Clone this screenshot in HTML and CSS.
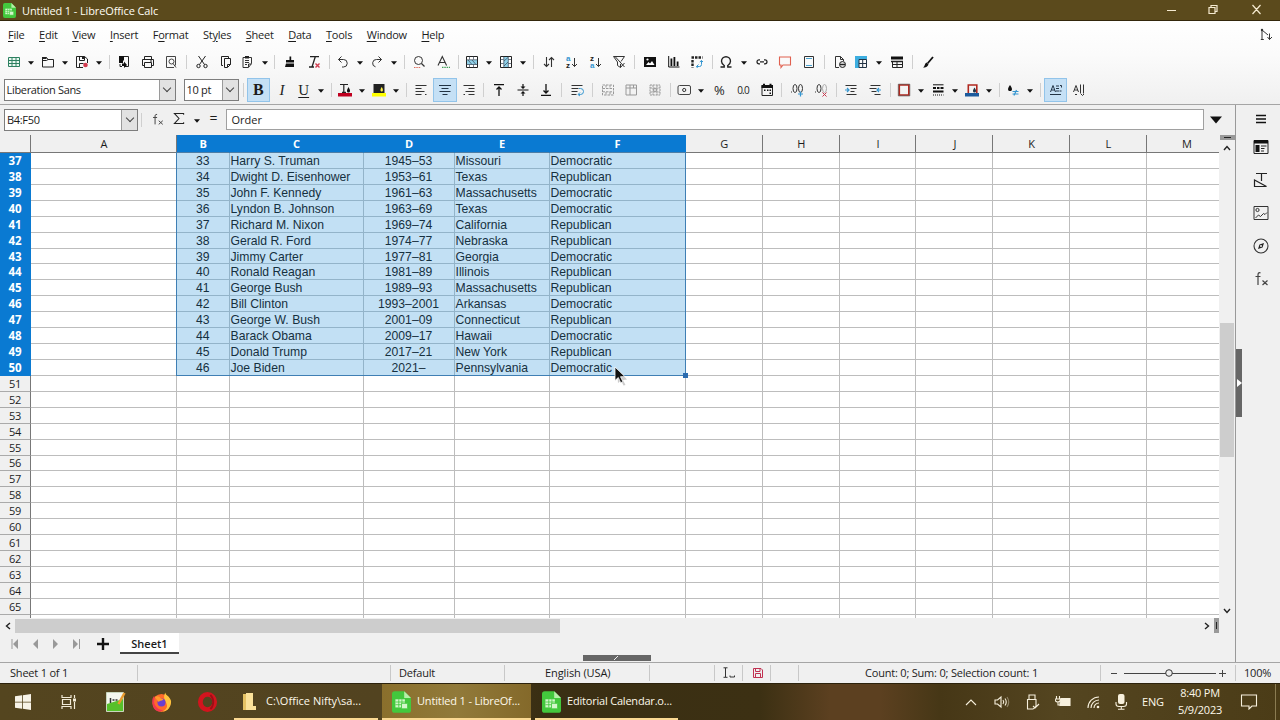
FILE: index.html
```html
<!DOCTYPE html>
<html lang="en">
<head>
    <meta charset="utf-8">
    <title>Untitled 1 - LibreOffice Calc</title>
    <link rel="stylesheet" href="styles.css">
</head>
<body>
<!-- Icon definitions -->
<svg class="sprite">
    <symbol id="calc" viewBox="0 0 14 16"><path fill="#43c83d" d="M2 0h7l5 5v9a2 2 0 0 1-2 2H2a2 2 0 0 1-2-2V2a2 2 0 0 1 2-2z"/><path fill="#b6f0a8" d="M9 0l5 5H9z"/><path fill="#d3f7cb" d="M2.500 6h7v6h-7z"/><path stroke="#43c83d" stroke-width=".6" d="M2.500 8h7M2.500 10h7M5 6v6M7.300 6v6"/><path fill="#d3f7cb" stroke="#43c83d" stroke-width=".6" d="M7 9h4.500v4H7z"/></symbol>
    <symbol id="new" viewBox="0 0 14 14"><path fill="#e9f7f0" stroke="#2d8060" d="M1.500 2.500h11v9h-11zM1.500 5.500h11M1.500 8.500h11M5 2.500v9M9 2.500v9"/></symbol>
    <symbol id="open" viewBox="0 0 14 14"><path fill="none" stroke="#222" d="M1.500 12V2.500h4l1.500 2h5.500V12zM1.500 5.500h4l1.500-1"/><path stroke="#222" stroke-width="2" d="M1 3h4.500"/></symbol>
    <symbol id="save" viewBox="0 0 14 14"><path fill="none" stroke="#222" d="M8 12.500H1.500v-11h8l3 2.500v4M4.500 1.500v4h5v-4M4.500 12V8.500h4"/><path fill="#222" d="M7 1.500h2V4H7z"/><circle cx="10.500" cy="10" r="2.300" fill="#d23c50"/></symbol>
    <symbol id="export" viewBox="0 0 14 14"><path fill="none" stroke="#222" d="M7 1.500h4.500v10H8M3 9v2.500h2"/><path fill="#111" d="M2 1h5v5l-1-1v3H2zM5 8.500h2V6.500l3 3.500-3 3v-2H5z"/></symbol>
    <symbol id="print" viewBox="0 0 14 14"><path fill="none" stroke="#222" d="M3.500 4.500v-3h7v3M3 10.500H1.500v-6h11v6H11M3.500 7.500h7v5h-7zM9 6h2"/></symbol>
    <symbol id="preview" viewBox="0 0 14 14"><path fill="none" stroke="#444" d="M10 12.500H2.500v-11h9v9"/><circle cx="7.500" cy="6.500" r="2.500" fill="none" stroke="#444"/><path stroke="#444" d="M9 8.500l3 4"/></symbol>
    <symbol id="cut" viewBox="0 0 14 14"><path fill="none" stroke="#222" d="M3.500 1l6 8.500M10.500 1l-6 8.500"/><circle cx="3.500" cy="11" r="1.700" fill="none" stroke="#222"/><circle cx="10.500" cy="11" r="1.700" fill="none" stroke="#222"/></symbol>
    <symbol id="copy" viewBox="0 0 14 14"><path fill="none" stroke="#222" d="M4 10.500H2.500v-9h7V3M5.500 3.500h6v6l-3 3h-3zM8.500 12V9.500h3"/></symbol>
    <symbol id="paste" viewBox="0 0 14 14"><path fill="none" stroke="#333" d="M3 2.500h8.500v6l-3 4H3zM5 5.500h4M5 7.500h4M5 9.500h2M8.500 12V9h3"/><path fill="#222" d="M5 1h4v2.500H5z"/></symbol>
    <symbol id="clone" viewBox="0 0 14 14"><path fill="#111" d="M6.500 1.500h1.700V5H11v2.500H3V5h3.500zM3 8.500h8V12H2z"/></symbol>
    <symbol id="clear" viewBox="0 0 14 14"><path stroke="#222" fill="none" stroke-width="1.300" d="M3 1.700h9M2 12h5M8.200 2L5 12"/><path stroke="#d23c50" stroke-width="1.400" d="M8.500 8.500l4 4m0-4l-4 4"/></symbol>
    <symbol id="undo" viewBox="0 0 14 14"><path fill="none" stroke="#333" d="M5.500 1.500l-3 3 3 3M2.500 4.500h5a3.700 3.700 0 0 1 0 7.500H6"/></symbol>
    <symbol id="redo" viewBox="0 0 14 14"><path fill="none" stroke="#333" d="M8.500 1.500l3 3-3 3M11.500 4.500h-5a3.700 3.700 0 0 0-1 7.300"/></symbol>
    <symbol id="find" viewBox="0 0 14 14"><circle cx="6.500" cy="5.500" r="4" fill="none" stroke="#333"/><path stroke="#333" stroke-width="1.300" d="M9.500 8.500l3 3"/><path stroke="#e07060" stroke-dasharray="1.500 .8" d="M2 12.500h7"/></symbol>
    <symbol id="spell" viewBox="0 0 14 14"><path fill="none" stroke="#333" stroke-width="1.100" d="M2 10.500L6.300 1.500l4.300 9M3.500 7.500h5.600"/><path stroke="#44a05a" stroke-dasharray="1.500 .8" stroke-width="1.200" d="M6 12.300h8"/></symbol>
    <symbol id="row" viewBox="0 0 14 14"><path fill="#fff" stroke="#222" d="M1.500 1.500h11v11h-11z"/><path fill="#8fd0e8" d="M2 5h10v4.500H2z"/><path fill="none" stroke="#345" stroke-width=".7" d="M1.500 4.800h11M1.500 9.500h11M4.500 1.500v3m4-3v3M4.500 9.500v3m4-3v3M3 5l4 4.500M7 5l4 4.500"/></symbol>
    <symbol id="col" viewBox="0 0 14 14"><path fill="#fff" stroke="#222" d="M1.500 1.500h11v11h-11z"/><path fill="#8fd0e8" d="M4.800 2h4.500v10H4.800z"/><path fill="none" stroke="#345" stroke-width=".7" d="M4.800 1.500v11M9.300 1.500v11M1.500 4.500h3m-3 4h3M9.300 4.500h3m-3 4h3M5 6l4-3.500M5 11l4-4"/></symbol>
    <symbol id="sort" viewBox="0 0 14 14"><path fill="none" stroke="#333" stroke-width="1.100" d="M4.500 2v9.500M2 9l2.500 2.500L7 9M9.500 12V2.500M7 5l2.500-2.500L12 5"/></symbol>
    <symbol id="filter" viewBox="0 0 14 14"><path fill="none" stroke="#333" d="M1.500 1.500h11L9 6.500M1.500 1.500L5.500 7v3.500l3 2V9M3.500 2l9 10M12.500 8l-4 4.500"/></symbol>
    <symbol id="image" viewBox="0 0 14 14"><path fill="#111" d="M1 2h12v10H1z"/><path fill="#fff" d="M3 10l2.500-3 1.500 1.500L9 6l2.500 4z"/><circle cx="4.500" cy="4.500" r="1.100" fill="#fff"/></symbol>
    <symbol id="chart" viewBox="0 0 14 14"><path fill="#111" d="M3.500 3.500h1.800V11H3.500zM6.500 2h1.800v9H6.500zM9.700 6.500h1.800V11H9.700z"/><path fill="none" stroke="#111" d="M1.700 1v11h10.800"/></symbol>
    <symbol id="pivot" viewBox="0 0 14 14"><path stroke="#222" stroke-width="2.400" stroke-dasharray="2.500 1" fill="none" d="M1.500 2.500h11M2.500 5v7.500"/><path fill="none" stroke="#3596d0" d="M11.500 5.500v4a2 2 0 0 1-2 2H6.500m2-2l-2 2 1 1.500M9.800 7l1.700-1.500L13 7"/></symbol>
    <symbol id="omega" viewBox="0 0 14 14"><path fill="none" stroke="#222" stroke-width="1.400" d="M1.500 12h3.700v-1.500A5 5 0 0 1 2.500 6.300a4.500 4.500 0 0 1 9 0 5 5 0 0 1-2.700 4.200V12h3.700"/></symbol>
    <symbol id="link" viewBox="0 0 14 14"><path fill="none" stroke="#222" stroke-width="1.200" d="M5 4.800H4a2 2 0 0 0 0 4h1M9 4.800h1a2 2 0 0 1 0 4H9M5 6.800h4"/></symbol>
    <symbol id="comment" viewBox="0 0 14 14"><path fill="none" stroke="#e0604f" stroke-width="1.100" d="M1.500 2h11v8H5l-2 2.500V10H1.500z"/></symbol>
    <symbol id="header" viewBox="0 0 14 14"><path fill="none" stroke="#333" d="M2.500 1.500h9v11h-9z"/><path stroke="#4aa3d0" d="M4 3.500h6M4 10.500h6"/></symbol>
    <symbol id="area" viewBox="0 0 14 14"><path fill="none" stroke="#333" d="M6 12.500H2.500v-11h5l3 3V6M7.500 1.500v3h3"/><circle cx="9.500" cy="9.500" r="3" fill="#ddd" stroke="#222"/><path stroke="#222" stroke-width="1.300" d="M7 9.500h5"/></symbol>
    <symbol id="freeze" viewBox="0 0 14 14"><path fill="#3daee0" d="M1 1h12v3.500H5V13H1z"/><path fill="none" stroke="#234" d="M5 4.500h7.500v8H5zM5 8.500h7.500M8.700 4.500v8"/></symbol>
    <symbol id="split" viewBox="0 0 14 14"><path fill="#111" d="M1 1.500h12v3H1z"/><path fill="none" stroke="#222" d="M2.500 6.500h10v6h-10zM2.500 9.500h10M7 6v7"/><path stroke="#222" stroke-width="1.500" d="M1 6.500h12"/></symbol>
    <symbol id="draw" viewBox="0 0 14 14"><path stroke="#111" stroke-width="1.800" d="M12 2L6.500 8.500"/><path fill="#111" d="M5.500 7.500l2 2c-1 2.500-3 3-5.500 3 2-1 1.500-4 3.500-5z"/></symbol>
    <symbol id="al" viewBox="0 0 14 14"><path stroke="#333" d="M1.500 2.500h11M1.500 5.500h6M1.500 8.500h9M1.500 11.500h6M11 11.500h1.500"/></symbol>
    <symbol id="ac" viewBox="0 0 14 14"><path stroke="#234" d="M1 2.500h12M3.500 5.500h7M1.500 8.500h11M4.500 11.500h5"/></symbol>
    <symbol id="ar" viewBox="0 0 14 14"><path stroke="#333" d="M1.500 2.500h11M6.500 5.500h6M3.500 8.500h9M6.500 11.500h6M1.500 11.500H3"/></symbol>
    <symbol id="top" viewBox="0 0 14 14"><path fill="none" stroke="#111" stroke-width="1.300" d="M2 1.700h10M7 13V4M4.500 6.500L7 4l2.500 2.500"/></symbol>
    <symbol id="mid" viewBox="0 0 14 14"><path fill="none" stroke="#111" stroke-width="1.200" d="M1.500 7h11M7 1v4M7 9v4"/><path fill="#111" d="M4.500 3.500h5L7 6zM4.500 10.500h5L7 8z"/></symbol>
    <symbol id="bot" viewBox="0 0 14 14"><path fill="none" stroke="#111" stroke-width="1.300" d="M2 12.300h10M7 1v9M4.500 7.500L7 10l2.500-2.500"/></symbol>
    <symbol id="wrap" viewBox="0 0 14 14"><path stroke="#333" d="M1.500 2.500h11M1.500 5.500h7M1.500 8.500h6M1.500 11.500h5"/><path fill="none" stroke="#3596d0" d="M9 5.500h1.500a3 3 0 0 1 0 6H8.500M10 9.500l-2 2 2 1.500"/></symbol>
    <symbol id="merge" viewBox="0 0 14 14"><path fill="none" stroke="#999" stroke-dasharray="2.500 1" d="M1.500 2h11v10h-11zM5 2v3m4-3v3M5 9v3m4-3v3M1.500 5.500h11M1.500 8.800h11"/></symbol>
    <symbol id="mergec" viewBox="0 0 14 14"><path fill="none" stroke="#999" d="M2 2h10.500v10H2zM2 5h10.500M6 2v10M9.500 2v3"/></symbol>
    <symbol id="unmerge" viewBox="0 0 14 14"><path fill="none" stroke="#999" d="M2 2h10v10H2zM2 5h10M2 9h10M5 2v10M9 2v10" stroke-dasharray="2 .8"/><circle cx="7" cy="7" r="1.500" fill="none" stroke="#999"/></symbol>
    <symbol id="money" viewBox="0 0 14 14"><rect x="1" y="2.500" width="12.500" height="9" rx="1.500" fill="none" stroke="#444"/><circle cx="7.200" cy="7" r="1.600" fill="none" stroke="#333"/></symbol>
    <symbol id="date" viewBox="0 0 14 14"><path fill="none" stroke="#222" d="M2 2.500h10.500v10H2z"/><path fill="#111" d="M1.500 2h11.500v3H1.500zM3 .8h2V2H3zM9.500.8h2V2h-2zM4 6.500h1.500V8H4zM7 6.500h1.500V8H7zM9.500 6.500H11V8H9.500zM9.500 9.500H11V11H9.500z"/></symbol>
    <symbol id="adddec" viewBox="0 0 14 14"><path fill="none" stroke="#333" d="M1.500 8.500v1"/><ellipse cx="5" cy="5.500" rx="2" ry="4" fill="none" stroke="#333"/><ellipse cx="10.500" cy="5.500" rx="2" ry="4" fill="none" stroke="#333"/><path stroke="#3596d0" stroke-width="1.200" d="M8 11h5M10.500 8.500v5"/></symbol>
    <symbol id="deldec" viewBox="0 0 14 14"><path fill="none" stroke="#333" d="M1.500 8.500v1"/><ellipse cx="5" cy="5.500" rx="2" ry="4" fill="none" stroke="#333"/><ellipse cx="10.500" cy="5.500" rx="2" ry="4" fill="none" stroke="#aaa"/><path stroke="#c8354b" d="M8.500 9.500l4 4m0-4l-4 4"/></symbol>
    <symbol id="ind" viewBox="0 0 14 14"><path stroke="#333" d="M1.500 2.500h11M6.500 5.500h6M6.500 8.500h4M2.500 11.500h10"/><path fill="none" stroke="#3596d0" stroke-width="1.200" d="M1 7h4M3 5l2 2-2 2"/></symbol>
    <symbol id="outd" viewBox="0 0 14 14"><path stroke="#333" d="M2.500 2.500h10M1.500 5.500h7M3.500 8.500h5M6.500 11.500h6"/><path fill="none" stroke="#3596d0" stroke-width="1.200" d="M9 7h4M11 5L9 7l2 2"/></symbol>
    <symbol id="border" viewBox="0 0 14 14"><path fill="none" stroke="#b0281f" stroke-width="1.600" d="M2.300 2h9.500v10H2.300z"/><path fill="none" stroke="#222" stroke-width=".5" d="M1.300 1.200h11.500v11.700H1.300z"/></symbol>
    <symbol id="bstyle" viewBox="0 0 14 14"><path stroke="#111" d="M2 1.800h10.500"/><path stroke="#111" stroke-width="1.800" d="M2 5h3m1 0h2.500m1 0h3M2 8.500h10.500"/><path stroke="#111" stroke-dasharray="1 1" d="M2 12h10.500"/></symbol>
    <symbol id="bcolor" viewBox="0 0 14 14"><path fill="none" stroke="#b0281f" stroke-width="1.600" d="M3.300 10V2h8.500v8"/><path fill="#234" d="M9.500 4.500C12 8 11 9.500 9.500 9.500S7 8 9.500 4.500z"/><path fill="#1c5a9c" d="M0 10h14v3.500H0z"/></symbol>
    <symbol id="cond" viewBox="0 0 14 14"><path fill="#111" d="M4 2C7.200 6 6 8 4 8S.8 6 4 2z"/><path fill="none" stroke="#3596d0" stroke-width="1.200" d="M6.500 8.500h6M6.500 11h6M10.500 7l-2.500 5.500"/></symbol>
    <symbol id="ltr" viewBox="0 0 14 14"><path fill="none" stroke="#234" d="M1.500 9L4 2.500 6.500 9M2.500 7h3.500M7 3h3M7 5.500h3M7 8h3M1 11.500h11M11 2.500h1.500v2M10.500 8l2 0"/></symbol>
    <symbol id="ttb" viewBox="0 0 14 14"><path fill="none" stroke="#333" d="M1.500 9L4 2.500 6.500 9M2.500 7h3.500M8.500 1.500v9M11.500 1.500v9M3 11l1 1 1-1M9 11l1.500 1.500L12 11"/></symbol>
    <symbol id="fcolor" viewBox="0 0 14 14"><path fill="none" stroke="#222" stroke-width="1.200" d="M2 1.500h8M5.800 1.500V9M4 9.300h4"/><path fill="#111" d="M10.500 4C13 8 12 9.500 10.500 9.500S8 8 10.500 4z"/><path fill="#c00020" d="M0 10h14v3.500H0z"/></symbol>
    <symbol id="bgcolor" viewBox="0 0 14 14"><path fill="#222" d="M1.500 1h11v9h-11z"/><path fill="#fff14a" d="M9.700 4c2 3 1.200 4.500 0 4.500S7.700 7 9.700 4z"/><path fill="#ffff00" d="M0 10h14v3.500H0z"/></symbol>
    <symbol id="sigma" viewBox="0 0 14 14"><path fill="none" stroke="#222" stroke-width="1.100" d="M12 3V1.500H2L7 7l-5 5.500h10V11"/></symbol>
    <symbol id="update" viewBox="0 0 14 14"><path fill="none" stroke="#333" d="M3 2v9M3 2l6 5M1.800 11.500h3M10.500 5.500v6M8.500 9l2 2.500 2.500-2.500"/><circle cx="3" cy="2" r="1.200" fill="#333"/></symbol>
    <symbol id="props" viewBox="0 0 16 16"><path fill="none" stroke="#222" d="M1 1.500h14v13H1z"/><path fill="#111" d="M1 1h14v3.500H1zM2.500 6h4v7h-4z"/><path stroke="#222" d="M8 7h5.500M8 9.500h3.500M8 12h3"/></symbol>
    <symbol id="styles" viewBox="0 0 16 16"><path fill="none" stroke="#222" stroke-width="1.200" d="M3 1.500h11M8.500 1.500V9M1.500 8v6.500h12z"/></symbol>
    <symbol id="gallery" viewBox="0 0 16 16"><path fill="none" stroke="#333" d="M1 1.500h14v13H1z"/><circle cx="4.500" cy="5" r="1.600" fill="none" stroke="#333"/><path fill="none" stroke="#333" d="M2.500 13l3-3 2 1.500 3-3 1.500 1 2-2"/></symbol>
    <symbol id="nav" viewBox="0 0 16 16"><circle cx="8" cy="8" r="7" fill="none" stroke="#333" stroke-width="1.100"/><path fill="#222" d="M11 5L9.500 9.500 5 11l1.500-4.500z"/><circle cx="8" cy="8" r="1" fill="#eee"/></symbol>
    <symbol id="fx" viewBox="0 0 16 16"><path fill="none" stroke="#444" stroke-width="1.200" d="M7.500 1.800C4.800 1.300 5 3 5 5v9M2.500 5.500h5M9.500 9.500l5 4.500m0-4.500l-5 4.500"/></symbol>
    <symbol id="arrow" viewBox="0 0 6 4"><path fill="#111" d="M0 .3h6L3 3.700z"/></symbol>
</svg>

<header class="titlebar">
    <svg class="app-icon"><use href="#calc"/></svg>
    <span class="title">Untitled 1 - LibreOffice Calc</span>
    <svg class="winbtns" viewBox="0 0 94 14">
        <path fill="none" stroke="#f5ead0" stroke-width="1.200" d="M0 7.500h9M42 4.500h6v6h-6zM44 4V2.500h6v6H48.500M85.500 2l8 9m0-9l-8 9"/>
    </svg>
</header>

<div class="top">
    <nav class="menu">
        <span><u>F</u>ile</span><span><u>E</u>dit</span><span><u>V</u>iew</span><span><u>I</u>nsert</span><span>F<u>o</u>rmat</span><span>St<u>y</u>les</span><span><u>S</u>heet</span><span><u>D</u>ata</span><span><u>T</u>ools</span><span><u>W</u>indow</span><span><u>H</u>elp</span>
        <svg class="update"><use href="#update"/></svg>
    </nav>
    <div class="toolbar" id="standard"></div>
    <div class="toolbar second">
        <div class="combo font-name"><span>Liberation Sans</span><i></i></div>
        <div class="combo font-size"><span>10 pt</span><i></i></div>
        <div class="group" id="formatting"></div>
    </div>
</div>

<div class="middle">
    <div class="work">
        <div class="formula">
            <div class="combo cell-name"><span>B4:F50</span><i></i></div>
            <b class="sep"></b>
            <svg class="fx"><use href="#fx"/></svg>
            <svg class="sigma"><use href="#sigma"/></svg>
            <svg class="arrow"><use href="#arrow"/></svg>
            <span class="equals">=</span>
            <div class="input">Order</div>
            <svg class="expand"><use href="#arrow"/></svg>
        </div>
        <div class="sheet">
            <div class="grid-wrap">
                <div class="grid" id="grid"></div>
                <div class="selection"><i></i></div>
                <svg class="pointer" viewBox="0 0 14 20"><path fill="#aaa" opacity=".6" d="M3 2.500l10 11-4 .5 2.500 5-2 .5-2.500-5-3 2.500z"/><path fill="#111" stroke="#fff" stroke-width=".8" d="M1 1v13.500l3.300-3 2.400 5.200 2.200-1-2.400-5h4.500z"/></svg>
            </div>
            <div class="vscroll">
                <b class="split-h"></b>
                <svg viewBox="0 0 8 6"><path d="M1 5l3-3.500L7 5"/></svg>
                <div class="track"><div class="thumb"></div></div>
                <svg viewBox="0 0 8 6"><path d="M1 1l3 3.500L7 1"/></svg>
            </div>
        </div>
        <div class="hscroll">
            <svg viewBox="0 0 6 8"><path d="M5 1L1.500 4 5 7"/></svg>
            <div class="thumb"></div>
            <svg viewBox="0 0 6 8"><path d="M1 1l3.500 3L1 7"/></svg>
            <b class="split-v"></b>
        </div>
        <div class="tabs">
            <svg class="tabnav" viewBox="0 0 70 12"><path fill="#999" d="M7 1v10L2 6zM27 1v10l-5-5zM42 1v10l5-5zM62 1v10l5-5z"/><path stroke="#999" d="M1 1v10M68.500 1v10"/></svg>
            <svg class="plus" viewBox="0 0 12 12"><path stroke="#111" stroke-width="2.400" d="M0 6h12M6 0v12"/></svg>
            <span class="tab">Sheet1</span>
            <svg class="handle" viewBox="0 0 68 6"><path stroke="#eee" d="M31 5l4-4"/></svg>
        </div>
    </div>
    <aside class="sidebar">
        <svg class="burger" viewBox="0 0 10 10"><path stroke="#111" stroke-width="1.300" d="M0 1.500h10M0 5h10M0 8.500h10"/></svg>
        <svg><use href="#props"/></svg>
        <svg><use href="#styles"/></svg>
        <svg><use href="#gallery"/></svg>
        <svg><use href="#nav"/></svg>
        <svg><use href="#fx"/></svg>
        <div class="grip"></div>
    </aside>
</div>

<footer class="status">
    <span class="s-sheet">Sheet 1 of 1</span>
    <span class="s-blank"></span>
    <span class="s-style">Default</span>
    <span class="s-lang">English (USA)</span>
    <span class="s-gap"></span>
    <span class="s-ins"><svg viewBox="0 0 14 12"><path fill="none" stroke="#333" d="M1.500.8h4M3.500 1v9M1.500 10.300h4M8 8.500v1.500h4.500V8.500"/></svg></span>
    <span class="s-mod"><svg viewBox="0 0 10 10"><path fill="none" stroke="#c03050" d="M.5.500h7.500l1.500 1.500v7.500h-9zM2.500.5v3h4.500v-3M2.500 9.500v-4h5v4"/></svg></span>
    <span class="s-sign"></span>
    <span class="s-count">Count: 0; Sum: 0; Selection count: 1</span>
    <span class="s-zoom"><svg viewBox="0 0 116 10"><path stroke="#444" d="M1 5.500h6M14 5.500h92M109 5.500h7M112.500 2v7"/><circle cx="59" cy="5" r="3.300" fill="#eee" stroke="#333"/></svg></span>
    <span class="s-pct">100%</span>
</footer>

<div class="taskbar">
    <div class="pin"><svg viewBox="0 0 16 16"><path fill="#f7f3e8" d="M0 2.300l7-1v6.400H0zM7.800 1.200L16 0v7.700H7.800zM0 8.400h7v6.300l-7-1zM7.800 8.400H16V16l-8.200-1.200z"/></svg></div>
    <div class="pin"><svg viewBox="0 0 16 16"><path fill="none" stroke="#f3ecd8" stroke-width="1.200" d="M1 1v2.500h9V1M1.500 5.500h8v5h-8zM1 15v-2.500h9V15M13.500 1v3M13.500 8v7"/><path fill="#f3ecd8" d="M12 4.500h3v3h-3z"/></svg></div>
    <div class="pin"><svg class="big" viewBox="0 0 20 22"><path fill="#f3f6ee" stroke="#c9d6bd" d="M1 1.500h17v19H1z"/><path fill="#57c02a" d="M1.500 13L17.500 8v12h-16z"/><path stroke="#333" stroke-width="1.500" d="M5 7v5M7 9h2M10 9h2"/><path stroke="#e89a2e" stroke-width="2.500" d="M19 2l-6 11"/></svg></div>
    <div class="pin"><svg class="big" viewBox="0 0 22 22"><circle cx="11" cy="12" r="9.500" fill="#ff6a2b"/><path fill="#ffc33d" d="M15 1c0 3 5 4 6 9 .5 6-4 11-9 11 4-2 6-5 4-9-1-3-4-5-1-11z"/><path fill="#f2384f" d="M3 5c2 1-1 5 1 9s6 6 9 5c-4 4-10 1-11-4S1 8 3 5z"/><circle cx="11" cy="11.500" r="4.200" fill="#6a3fd0"/><path fill="#ff9a2b" d="M4 6c2-2 5-1 6 1l3 1c-1 2-4 1-5 3z"/></svg></div>
    <div class="pin"><svg class="big" viewBox="0 0 22 22"><ellipse cx="11" cy="11" rx="7.500" ry="8" fill="none" stroke="#d2141e" stroke-width="5"/><path fill="none" stroke="#9c0f16" stroke-width="2" d="M14 3.500c4 4 4 11 0 15"/></svg></div>
    <div class="task folder"><svg viewBox="0 0 14 18"><path fill="#e5c264" d="M0 1h6l1 16H0z"/><path fill="#fbe29a" d="M3 0h7v13h3v4H3z"/></svg><span>C:\Office Nifty\sa...</span></div>
    <div class="task active"><svg class="calc"><use href="#calc"/></svg><span>Untitled 1 - LibreOf...</span></div>
    <div class="task third"><svg class="calc"><use href="#calc"/></svg><span>Editorial Calendar.o...</span></div>
    <div class="tray">
        <svg viewBox="0 0 16 16"><path d="M3 11l5-5 5 5"/></svg>
        <svg viewBox="0 0 16 16"><path d="M1 6h2.500L7 3v10L3.500 10H1zM9 6q1.500 2 0 4M11 4.500q2.500 3.500 0 7"/><path opacity=".4" d="M13 3q3.500 5 0 10"/></svg>
        <svg viewBox="0 0 16 16"><path d="M5 5V1h6v4M3.500 5.500h8.500V12q-1 2.500-3 3H3.500zM9 12l2 2 4-4"/></svg>
        <svg viewBox="0 0 16 16"><path d="M1.500 2v3M4.500 2v3M0 5h5.500q0 3-2.700 3T0 5M3 8v3h2"/><path class="solid" d="M6 4.500h9v7H5V9z"/></svg>
        <svg viewBox="0 0 16 16"><path d="M3 14A11 11 0 0 1 14 3M6 14a8 8 0 0 1 8-8M9 14a5 5 0 0 1 5-5"/><circle class="solid" cx="13" cy="13" r="1.300"/></svg>
        <svg viewBox="0 0 16 16"><rect class="solid" x="5" y="0" width="6.500" height="10" rx="2"/><path d="M3 8v2q0 2.500 3 2.500h4.500q3 0 3-2.500V8M8.300 12.500V15M5 15.300h6.500"/></svg>
        <span class="lang">ENG</span>
        <div class="clock"><span>8:40 PM</span><span>5/9/2023</span></div>
        <svg class="notif" viewBox="0 0 18 16"><path stroke-width="1.300" d="M1.500 1h15v11H12l-3 3v-3H1.500z"/></svg>
        <b class="peek"></b>
    </div>
</div>

<script src="sheet.js"></script>
</body>
</html>
```
FILE: styles.css
```css
* {
    box-sizing: border-box;
}

body {
    margin: 0;
    width: 1280px;
    height: 720px;
    overflow: hidden;
    display: flex;
    flex-direction: column;
    background: #f0f0f0;
    color: #1c1c1c;
    font-family: "Open Sans", "Noto Sans", sans-serif;
    font-size: 11px;
    line-height: 14px;
    white-space: nowrap;
}

svg {
    display: block;
    flex: none;
}

.sprite {
    position: absolute;
    width: 0;
    height: 0;
}

.ic-txt {
    font: bold 8px "Liberation Sans", sans-serif;
    fill: #222;
}

.ic-txt.blue {
    fill: #3596d0;
}

/* Title bar */
.titlebar {
    display: flex;
    align-items: center;
    flex: none;
    height: 21px;
    padding: 0 19px 0 3px;
    background: #5b4a1c;
    border-bottom: 1px solid #33270c;
    color: #fffdf4;
}

.app-icon {
    width: 13px;
    height: 15px;
    margin-right: 6px;
}

.title {
    padding-top: 1px;
    letter-spacing: -0.12px;
}

.winbtns {
    width: 94px;
    height: 14px;
    margin-left: auto;
}

/* Menu and toolbars */
.top {
    flex: none;
    height: 84px;
    background: linear-gradient(#fff, #fbfbfb 40%, #f0f0f0);
    border-bottom: 1px solid #a5a5a5;
}

.menu {
    display: flex;
    align-items: center;
    height: 27px;
    padding-left: 8px;
    gap: 14.600px;
    letter-spacing: -0.24px;
}

.menu u {
    text-underline-offset: 2px;
}

.update {
    width: 14px;
    height: 14px;
    margin: 0 7px 0 auto;
}

.toolbar {
    display: flex;
    align-items: center;
    height: 27px;
    padding-left: 3.500px;
}

.toolbar.second {
    height: 30px;
    padding-bottom: 1px;
}

.group {
    display: flex;
    align-items: center;
}

.toolbar svg {
    width: 14px;
    height: 14px;
}

.btn {
    display: flex;
    justify-content: center;
    align-items: center;
    width: 23.600px;
    height: 24px;
}

.btn.drop {
    width: 34px;
    justify-content: flex-start;
    padding-left: 3px;
}

.btn.on {
    background: #c5e0f5;
    border: 1px solid #92c4ea;
}

.toolbar .arrow, .arrow {
    width: 6px;
    height: 4px;
    margin: 2px 0 0 7.500px;
}

.sep {
    width: 1px;
    height: 14px;
    margin: 0 3px;
    background: #cfcfcf;
}

.letter {
    width: 14px;
    text-align: center;
    font: 15px/16px "Liberation Serif", serif;
}

.letter.bold {
    font-size: 16px;
    font-weight: bold;
}

.letter.italic {
    font-style: italic;
}

.letter.under {
    text-decoration: underline;
    text-underline-offset: 2px;
}

.letter.pct {
    font: 13px/14px "Open Sans", sans-serif;
}

.letter.decimal {
    font: 10px/14px "Open Sans", sans-serif;
    letter-spacing: -0.8px;
}

.combo {
    display: flex;
    flex: none;
    height: 22px;
    background: #fff;
    border: 1px solid #7d7d7d;
    letter-spacing: -0.32px;
}

.combo span {
    flex: 1;
    padding-left: 2px;
    line-height: 20px;
}

.combo i {
    display: flex;
    justify-content: center;
    align-items: center;
    width: 16px;
    background: #e2e2e2;
    border-left: 1px solid #9a9a9a;
}

.combo i::after {
    content: "";
    width: 5px;
    height: 5px;
    margin-top: -3px;
    border: solid #444;
    border-width: 0 1px 1px 0;
    transform: rotate(45deg);
}

.font-name {
    width: 172px;
    margin-right: 8px;
}

.font-size {
    width: 55px;
    margin-right: 1px;
}

.cell-name {
    width: 134px;
}

/* Work area */
.middle {
    display: flex;
    flex: none;
    height: 557px;
}

.work {
    width: 1235px;
    display: flex;
    flex-direction: column;
}

.formula {
    display: flex;
    align-items: center;
    height: 30px;
    padding: 0 0 1px 4px;
}

.formula .fx {
    width: 13px;
    height: 13px;
    margin-left: 6px;
}

.formula .sigma {
    width: 14px;
    height: 13px;
    margin: -3px 0 0 8px;
}

.equals {
    width: 10px;
    margin: 0 6px 3px 10px;
    font-size: 14px;
}

.input {
    width: 978px;
    height: 21px;
    padding-left: 5px;
    line-height: 19px;
    background: #fff;
    border: 1px solid #a0a0a0;
}

.expand {
    width: 12px;
    height: 8px;
    margin-left: 6px;
}

.sheet {
    display: flex;
    height: 483px;
}

.grid-wrap {
    position: relative;
    width: 1219px;
    overflow: hidden;
}

.grid {
    display: grid;
    width: 1224px;
    grid-template-columns: 31px 146px 52.500px 134px 91px 95px 136px 77.500px 76.700px 76.800px 76.800px 76.800px 76.800px 80px;
    grid-template-rows: 18px;
    grid-auto-rows: 15.930px;
    background: #fff;
}

.head, .num {
    display: flex;
    justify-content: center;
    align-items: center;
    padding-left: 1px;
    background: #f0f0f0;
    border-right: 1px solid #777;
    border-bottom: 1px solid #777;
}

.num {
    padding: 1px 0 0;
    border-bottom-color: #aaa;
    letter-spacing: -0.2px;
}

.head.sel, .num.sel {
    background: #0a7ad2;
    border-color: #0a7ad2;
    color: #fff;
    font-weight: bold;
}

.head.sel {
    border-bottom-color: #4d7da5;
}

.num.sel {
    font-size: 11.500px;
}

.cell {
    padding-left: 1px;
    overflow: hidden;
    border-right: 1px solid #bdbdbd;
    border-bottom: 1px solid #bdbdbd;
    font: 12.200px/16px "Liberation Sans", Arial, sans-serif;
}

.cell.sel {
    background: #c2e0f4;
    border-color: #93b4c9;
    color: #16303f;
}

.cell.center {
    padding: 0;
    text-align: center;
}

/* Outline drawn over the selected range */
.selection {
    position: absolute;
    left: 176px;
    top: 17px;
    width: 510px;
    height: 224px;
    border: 1px solid #3f7fb4;
    border-top: 0;
}

.selection i {
    position: absolute;
    right: -3px;
    bottom: -3px;
    width: 5px;
    height: 5px;
    background: #2b6cb0;
}

.pointer {
    position: absolute;
    left: 614px;
    top: 231px;
    width: 14px;
    height: 20px;
}

.vscroll {
    display: flex;
    flex-direction: column;
    align-items: center;
    width: 16px;
    padding: 0 1px;
}

.vscroll svg {
    width: 8px;
    height: 6px;
    margin: 5px 0 4px;
}

.vscroll path, .hscroll path {
    fill: none;
    stroke: #222;
    stroke-width: 1.400;
}

.split-h {
    width: 15px;
    height: 5px;
    border: solid #999;
    border-width: 2px 4px;
    background: #222;
}

.track {
    flex: 1;
    width: 14px;
    padding-top: 168px;
}

.track .thumb {
    height: 134px;
    background: #cdcdcd;
}

.hscroll {
    display: flex;
    align-items: center;
    height: 15px;
}

.hscroll svg {
    width: 6px;
    height: 8px;
    margin: 0 4px 0 5px;
}

.hscroll .thumb {
    width: 545px;
    height: 14px;
    margin-right: auto;
    background: #cdcdcd;
}

.split-v {
    width: 5px;
    height: 15px;
    margin-right: 16px;
    border: solid #999;
    border-width: 4px 2px;
    background: #222;
}

.tabs {
    display: flex;
    height: 29px;
    padding-left: 11px;
}

.tabnav {
    width: 70px;
    height: 12px;
    margin-top: 5px;
}

.plus {
    width: 12px;
    height: 12px;
    margin: 5px 11px 0 16px;
}

.tab {
    width: 59px;
    height: 21px;
    line-height: 21px;
    text-align: center;
    background: #fff;
    border-bottom: 2px solid #444;
    font-weight: 600;
}

.handle {
    width: 68px;
    height: 6px;
    margin: 22px 0 0 404px;
    background: #666;
}

/* Sidebar */
.sidebar {
    position: relative;
    width: 45px;
    padding-left: 5px;
    border-left: 1px solid #999;
    display: flex;
    flex-direction: column;
    align-items: center;
    gap: 17px;
}

.sidebar svg {
    width: 16px;
    height: 16px;
}

.sidebar .burger {
    width: 10px;
    height: 10px;
    margin: 9px 0 -2px;
}

.grip {
    position: absolute;
    left: 0;
    top: 244px;
    width: 6px;
    height: 68px;
    background: #666;
}

.grip::after {
    content: "";
    position: absolute;
    left: 1px;
    top: 30px;
    border: solid transparent;
    border-width: 4px 0 4px 5px;
    border-left-color: #fff;
}

/* Status bar */
.status {
    display: flex;
    align-items: center;
    flex: none;
    height: 21px;
    border-top: 1px solid #a5a5a5;
    letter-spacing: -0.2px;
}

.status span {
    display: flex;
    align-items: center;
    height: 16px;
    border-right: 1px solid #c8c8c8;
}

.s-sheet { width: 138px; padding-left: 10px; }
.s-blank { width: 253px; }
.s-style { width: 114px; padding-left: 8px; }
.s-lang { width: 145px; padding-left: 40px; letter-spacing: -0.1px; }
.s-gap { width: 65px; }
.s-ins { width: 28px; padding-left: 7px; }
.s-mod { width: 28px; padding-left: 10px; }
.s-sign { width: 28px; }
.s-count { width: 302px; padding-left: 66px; }
.s-zoom { width: 135px; padding-left: 9px; }
.status .s-pct { border: 0; padding-left: 8px; }
.s-ins svg { width: 14px; height: 12px; }
.s-mod svg { width: 10px; height: 10px; }
.s-zoom svg { width: 116px; height: 10px; }

/* Taskbar */
.taskbar {
    display: flex;
    flex: none;
    height: 37px;
    background: linear-gradient(90deg, #54451f 0, #524320 380px, #3a2f13 540px, #3c3013 760px, #5c4020 830px, #5c4020 880px, #463716 940px, #544520 1060px, #4b3c17 1280px);
    border-top: 1px solid #2c220c;
    color: #fdf8ea;
}

.pin {
    display: flex;
    justify-content: center;
    align-items: center;
    width: 46px;
}

.pin svg {
    width: 16px;
    height: 16px;
}

.pin .big {
    width: 21px;
    height: 22px;
}

.task {
    display: flex;
    align-items: center;
    gap: 6px;
    height: 36px;
    padding-left: 7px;
    border-bottom: 2px solid #fbd993;
}

.task svg {
    width: 14px;
    height: 18px;
    margin-top: 2px;
}

.task .calc {
    width: 19px;
    height: 22px;
}

.folder {
    width: 144px;
    padding-left: 9px;
    margin-left: 4px;
    gap: 9px;
}

.active {
    width: 149px;
    margin-left: 4px;
    padding-left: 10px;
    background: linear-gradient(90deg, #8a6f2c, #917a3a 50%, #84692a);
    letter-spacing: -0.15px;
}

.third {
    width: 143px;
    margin-left: 4px;
    letter-spacing: -0.2px;
}

.tray {
    display: flex;
    align-items: center;
    margin-left: auto;
}

.tray svg {
    width: 16px;
    height: 16px;
    margin-right: 14.400px;
}

.tray svg:nth-child(6) {
    margin-right: 13px;
}

.tray svg:nth-child(5) {
    margin-right: 12px;
}

.tray path {
    fill: none;
    stroke: #f7f0dd;
    stroke-width: 1.100;
}

.tray .solid {
    fill: #f7f0dd;
}

.lang {
    width: 22px;
    letter-spacing: -0.2px;
}

.clock {
    display: flex;
    flex-direction: column;
    align-items: center;
    width: 44px;
    margin: 0 18px 2px 14px;
    line-height: 17px;
    letter-spacing: -0.2px;
}

.tray .notif {
    width: 18px;
    margin-right: 17px;
}

.peek {
    width: 5px;
    height: 36px;
    border-left: 1px solid #8b7c52;
}
```
FILE: sheet.js
```javascript
// Toolbar contents: "|" is a separator, "+" after a name adds a dropdown arrow, "*" marks it pressed
const standard = 'new+ open+ save+ | export print preview | cut copy paste+ | clone clear | undo+ redo+ | find spell | row+ col+ | sort asc desc filter | image chart pivot | omega+ link comment header | area freeze+ split | draw';
const formatting = '| B* I U+ | fcolor+ bgcolor+ | al ac* ar | top mid bot | wrap | merge mergec unmerge | money+ % 0.0 date | adddec deldec | ind outd | border+ bstyle+ bcolor+ | cond+ | ltr* ttb';
const letters = { B: 'bold', I: 'italic', U: 'under', '%': 'pct', '0.0': 'decimal' };

function sortIcon(first, second) {
    return `<svg viewBox="0 0 14 14">
        <text class="ic-txt${first === 'a' ? ' blue' : ''}" x="1" y="6">${first}</text>
        <text class="ic-txt${second === 'a' ? ' blue' : ''}" x="1" y="12.500">${second}</text>
        <path fill="none" stroke="#333" d="M9.500 3v8.500M7 9l2.500 2.500L12 9"/>
    </svg>`;
}

function icon(name) {
    if (name === 'asc') return sortIcon('a', 'z');
    if (name === 'desc') return sortIcon('z', 'a');
    if (letters[name]) return `<span class="letter ${letters[name]}">${name}</span>`;
    return `<svg><use href="#${name}"/></svg>`;
}

function toolbar(id, items) {
    document.getElementById(id).innerHTML = items.split(' ').map(item => {
        if (item === '|') return '<b class="sep"></b>';
        const name = item.replace(/[+*]/, '');
        const drop = item.endsWith('+');
        const arrow = drop ? '<svg class="arrow"><use href="#arrow"/></svg>' : '';
        return `<div class="btn${drop ? ' drop' : ''}${item.endsWith('*') ? ' on' : ''}">${icon(name)}${arrow}</div>`;
    }).join('');
}

toolbar('standard', standard);
toolbar('formatting', formatting);

const data = [
    [33, 'Harry S. Truman', '1945–53', 'Missouri', 'Democratic'],
    [34, 'Dwight D. Eisenhower', '1953–61', 'Texas', 'Republican'],
    [35, 'John F. Kennedy', '1961–63', 'Massachusetts', 'Democratic'],
    [36, 'Lyndon B. Johnson', '1963–69', 'Texas', 'Democratic'],
    [37, 'Richard M. Nixon', '1969–74', 'California', 'Republican'],
    [38, 'Gerald R. Ford', '1974–77', 'Nebraska', 'Republican'],
    [39, 'Jimmy Carter', '1977–81', 'Georgia', 'Democratic'],
    [40, 'Ronald Reagan', '1981–89', 'Illinois', 'Republican'],
    [41, 'George Bush', '1989–93', 'Massachusetts', 'Republican'],
    [42, 'Bill Clinton', '1993–2001', 'Arkansas', 'Democratic'],
    [43, 'George W. Bush', '2001–09', 'Connecticut', 'Republican'],
    [44, 'Barack Obama', '2009–17', 'Hawaii', 'Democratic'],
    [45, 'Donald Trump', '2017–21', 'New York', 'Republican'],
    [46, 'Joe Biden', '2021–', 'Pennsylvania', 'Democratic']
];

let html = '<div class="head"></div>';
[...'ABCDEFGHIJKLM'].forEach(c => {
    html += `<div class="head${c > 'A' && c < 'G' ? ' sel' : ''}">${c}</div>`;
});

for (let r = 37; r <= 66; r++) {
    const row = data[r - 37];
    html += `<div class="num${row ? ' sel' : ''}">${r < 66 ? r : ''}</div>`;
    for (let c = 0; c < 13; c++) {
        const sel = row && c > 0 && c < 6;
        const center = c === 1 || c === 3;
        html += `<div class="cell${sel ? ' sel' : ''}${center ? ' center' : ''}">${sel ? row[c - 1] : ''}</div>`;
    }
}
document.getElementById('grid').innerHTML = html;
```
